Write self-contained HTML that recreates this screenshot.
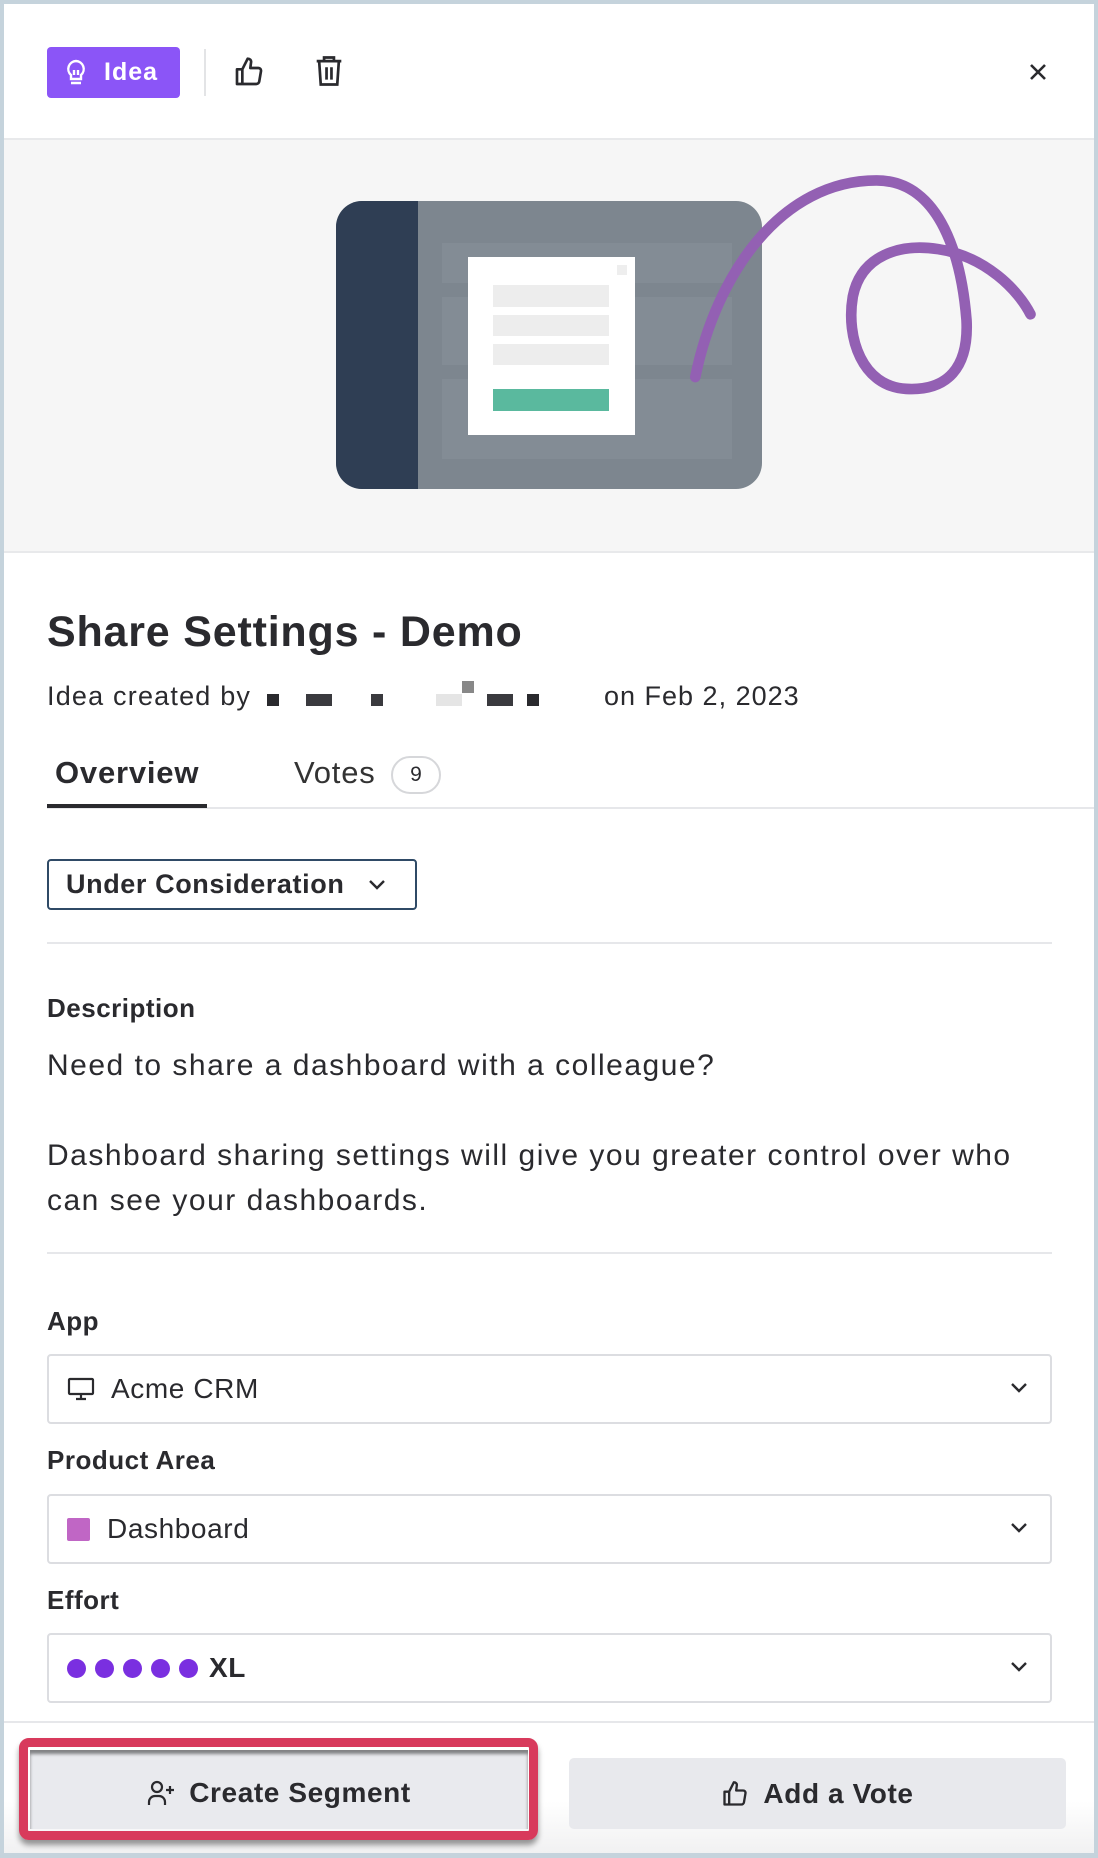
<!DOCTYPE html>
<html><head><meta charset="utf-8"><style>
*{box-sizing:border-box;margin:0;padding:0}
body{width:1098px;height:1858px;background:#c5d3dc;font-family:"Liberation Sans",sans-serif;color:#2a2a2e;position:relative;overflow:hidden}
.panel{position:absolute;left:4px;top:4px;width:1090px;height:1849px;background:#fff}
.abs{position:absolute}
.line{position:absolute;height:2px;background:#e6e7ea}
.label{position:absolute;left:47px;font-size:26px;font-weight:bold;color:#2a2a2e;letter-spacing:.5px}
.sel{position:absolute;left:47px;width:1005px;height:70px;border:2px solid #dcdde1;border-radius:4px;font-size:28px;display:flex;align-items:center;padding-left:18px;letter-spacing:.6px}
.chev{position:absolute;right:22px;top:26px}
</style></head><body>
<div class="panel"></div>
<!-- header -->
<div class="abs" style="left:47px;top:47px;width:133px;height:51px;background:#8b55f7;border-radius:4px;color:#fff;font-size:25px;font-weight:bold;display:flex;align-items:center">
<svg style="margin-left:18px" width="22" height="28" viewBox="0 0 22 28" fill="none" stroke="#fff" stroke-width="2.4"><path d="M11 2a8 8 0 0 0-5 14v4h10v-4a8 8 0 0 0-5-14z"/><path d="M6 24h10M9 16v-5M13 16v-5"/></svg>
<span style="margin-left:17px;letter-spacing:1px">Idea</span></div>
<div class="abs" style="left:204px;top:49px;width:2px;height:47px;background:#e3e4e6"></div>
<svg class="abs" style="left:233px;top:56px" width="32" height="32" viewBox="0 0 24 24" fill="none" stroke="#2a2a2e" stroke-width="2" stroke-linejoin="round"><path d="M7 10v11H3V10h4zM7 10l4-8c1.5 0 3 1 2.5 3L13 9h6a2 2 0 0 1 2 2.3l-1.3 7.7A2.3 2.3 0 0 1 17.4 21H7"/></svg>
<svg class="abs" style="left:314px;top:55px" width="30" height="32" viewBox="0 0 24 26" fill="none" stroke="#2a2a2e" stroke-width="2.2"><path d="M2 5h20M8 5V2h8v3M4 5l1.3 19h13.4L20 5M10 10v10M14 10v10"/></svg>
<svg class="abs" style="left:1028px;top:62px" width="20" height="20" viewBox="0 0 20 20" stroke="#2a2a2e" stroke-width="2.6"><path d="M3 3l14 14M17 3L3 17"/></svg>
<!-- hero -->
<div class="abs" style="left:4px;top:138px;width:1090px;height:415px;background:#f6f6f6;border-top:2px solid #e8e9eb;border-bottom:2px solid #e8e9eb"></div>
<div class="abs" style="left:336px;top:201px;width:426px;height:288px;border-radius:26px;background:#7d868f;overflow:hidden">
<div class="abs" style="left:0;top:0;width:82px;height:288px;background:#2f3e54"></div>
<div class="abs" style="left:106px;top:42px;width:290px;height:40px;background:#838c95"></div>
<div class="abs" style="left:106px;top:96px;width:290px;height:68px;background:#838c95"></div>
<div class="abs" style="left:106px;top:178px;width:290px;height:80px;background:#838c95"></div>
<div class="abs" style="left:132px;top:56px;width:167px;height:178px;background:#fff">
<div class="abs" style="left:149px;top:8px;width:10px;height:10px;background:#eee"></div>
<div class="abs" style="left:25px;top:28px;width:116px;height:22px;background:#ededed"></div>
<div class="abs" style="left:25px;top:58px;width:116px;height:21px;background:#ededed"></div>
<div class="abs" style="left:25px;top:87px;width:116px;height:21px;background:#ededed"></div>
<div class="abs" style="left:25px;top:132px;width:116px;height:22px;background:#5ab99e"></div>
</div></div>
<svg class="abs" style="left:0;top:0" width="1098" height="1858" viewBox="0 0 927 1568" fill="none" stroke="#9360b3" stroke-width="9" stroke-linecap="round"><path d="M587 318C605 230 660 152 740 152C795 152 812 220 816 270C818 310 800 330 765 328C728 326 714 285 720 250C727 215 760 205 792 210C832 216 860 245 870 265"/></svg>
<!-- title -->
<div class="abs" style="left:47px;top:608px;font-size:43px;font-weight:bold;color:#2a2a2e;letter-spacing:.8px">Share Settings - Demo</div>
<div class="abs" style="left:47px;top:681px;font-size:27px;color:#2a2a2e;letter-spacing:1.2px">Idea created by</div>
<div class="abs" style="left:267px;top:694px;width:12px;height:12px;background:#2a2a2e"></div>
<div class="abs" style="left:306px;top:694px;width:26px;height:12px;background:#3a3a3e"></div>
<div class="abs" style="left:371px;top:694px;width:12px;height:12px;background:#3a3a3e"></div>
<div class="abs" style="left:436px;top:694px;width:26px;height:12px;background:#e5e5e5"></div>
<div class="abs" style="left:462px;top:681px;width:12px;height:12px;background:#888"></div>
<div class="abs" style="left:487px;top:694px;width:26px;height:12px;background:#3a3a3e"></div>
<div class="abs" style="left:527px;top:694px;width:12px;height:12px;background:#2a2a2e"></div>
<div class="abs" style="left:604px;top:681px;font-size:27px;letter-spacing:1px">on Feb 2, 2023</div>
<!-- tabs -->
<div class="abs" style="left:55px;top:755px;font-size:31px;font-weight:bold;letter-spacing:.8px">Overview</div>
<div class="abs" style="left:294px;top:755px;font-size:31px;color:#333;letter-spacing:.8px">Votes</div>
<div class="abs" style="left:391px;top:756px;width:50px;height:38px;border:2px solid #d6d7da;border-radius:19px;font-size:21px;display:flex;align-items:center;justify-content:center">9</div>
<div class="line" style="left:47px;top:807px;width:1047px"></div>
<div class="abs" style="left:47px;top:804px;width:160px;height:4px;background:#2a2a2e"></div>
<!-- status -->
<div class="abs" style="left:47px;top:859px;width:370px;height:51px;border:2px solid #2f4a66;border-radius:4px;font-size:27px;font-weight:bold;display:flex;align-items:center;padding-left:17px;letter-spacing:.6px">Under Consideration
<svg style="margin-left:24px" width="18" height="12" viewBox="0 0 18 12" fill="none" stroke="#2a2a2e" stroke-width="2.4"><path d="M2 2l7 7 7-7"/></svg></div>
<div class="line" style="left:47px;top:942px;width:1005px"></div>
<div class="label" style="top:993px">Description</div>
<div class="abs" style="left:47px;top:1043px;font-size:30px;line-height:45px;color:#2a2a2e;letter-spacing:1.5px;white-space:nowrap">Need to share a dashboard with a colleague?<br><br>Dashboard sharing settings will give you greater control over who<br>can see your dashboards.</div>
<div class="line" style="left:47px;top:1252px;width:1005px"></div>
<div class="label" style="top:1306px">App</div>
<div class="sel" style="top:1354px"><svg width="28" height="24" viewBox="0 0 28 24" fill="none" stroke="#2a2a2e" stroke-width="2.2"><rect x="2" y="2" width="24" height="15" rx="1"/><path d="M9 22h10M14 17v5"/></svg><span style="margin-left:16px">Acme CRM</span><svg class="chev" width="18" height="12" viewBox="0 0 18 12" fill="none" stroke="#2a2a2e" stroke-width="2.4"><path d="M2 2l7 7 7-7"/></svg></div>
<div class="label" style="top:1445px">Product Area</div>
<div class="sel" style="top:1494px"><span style="width:23px;height:23px;background:#c066c5;border-radius:2px;display:inline-block"></span><span style="margin-left:17px">Dashboard</span><svg class="chev" width="18" height="12" viewBox="0 0 18 12" fill="none" stroke="#2a2a2e" stroke-width="2.4"><path d="M2 2l7 7 7-7"/></svg></div>
<div class="label" style="top:1585px">Effort</div>
<div class="sel" style="top:1633px;font-weight:bold">
<span style="display:flex;gap:9px"><i style="width:19px;height:19px;border-radius:50%;background:#7a2fe0"></i><i style="width:19px;height:19px;border-radius:50%;background:#7a2fe0"></i><i style="width:19px;height:19px;border-radius:50%;background:#7a2fe0"></i><i style="width:19px;height:19px;border-radius:50%;background:#7a2fe0"></i><i style="width:19px;height:19px;border-radius:50%;background:#7a2fe0"></i></span><span style="margin-left:11px">XL</span><svg class="chev" width="18" height="12" viewBox="0 0 18 12" fill="none" stroke="#2a2a2e" stroke-width="2.4"><path d="M2 2l7 7 7-7"/></svg></div>
<!-- footer -->
<div class="line" style="left:4px;top:1721px;width:1090px"></div>
<div class="abs" style="left:4px;top:1723px;width:1090px;height:130px;background:linear-gradient(#fff 60%,#f1f1f2)"></div>
<div class="abs" style="left:19px;top:1738px;width:519px;height:102px;border:9px solid #d83a5c;border-radius:10px;box-shadow:0 5px 6px rgba(0,0,0,.4)"></div>
<div class="abs" style="left:30px;top:1750px;width:498px;height:79px;background:#e9eaee;box-shadow:inset 0 4px 3px rgba(0,0,0,.45);display:flex;align-items:center;justify-content:center;font-size:28px;font-weight:bold;padding-top:6px;letter-spacing:.6px">
<svg width="30" height="26" viewBox="0 0 30 26" fill="none" stroke="#2a2a2e" stroke-width="2.2"><circle cx="10" cy="7" r="5"/><path d="M2 25v-3a6 6 0 0 1 6-6h4a6 6 0 0 1 6 6v3M23 6v8M19 10h8"/></svg><span style="margin-left:12px">Create Segment</span></div>
<div class="abs" style="left:569px;top:1758px;width:497px;height:71px;background:#e8e9ed;border-radius:5px;display:flex;align-items:center;justify-content:center;font-size:28px;font-weight:bold;letter-spacing:.6px">
<svg width="28" height="28" viewBox="0 0 24 24" fill="none" stroke="#2a2a2e" stroke-width="2" stroke-linejoin="round"><path d="M7 10v11H3V10h4zM7 10l4-8c1.5 0 3 1 2.5 3L13 9h6a2 2 0 0 1 2 2.3l-1.3 7.7A2.3 2.3 0 0 1 17.4 21H7"/></svg><span style="margin-left:14px">Add a Vote</span></div>
</body></html>
